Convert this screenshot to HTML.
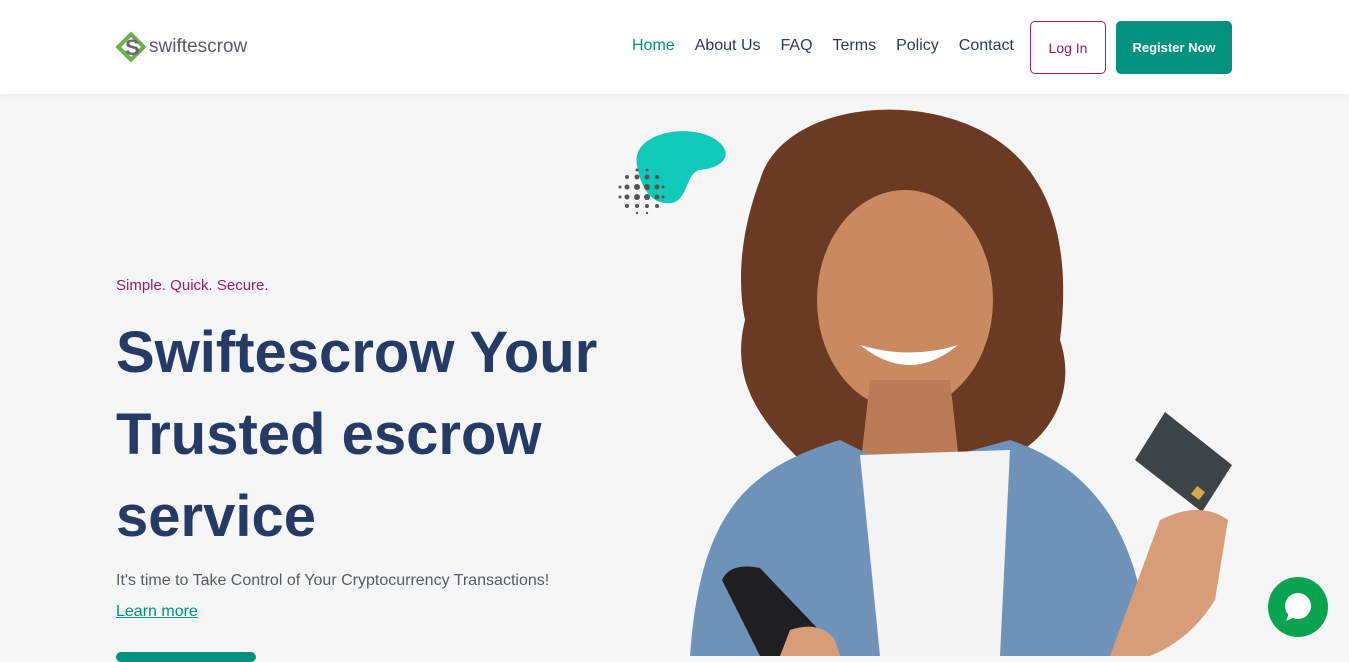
<!DOCTYPE html>
<html><head><meta charset="utf-8"><style>
*{margin:0;padding:0;box-sizing:border-box}
body{width:1349px;height:656px;overflow:hidden;background:#f6f6f6;font-family:"Liberation Sans",sans-serif;position:relative}
header{position:absolute;top:0;left:0;width:1349px;height:94px;background:#fff;box-shadow:0 2px 8px rgba(0,0,0,.05);z-index:5}
.logo{position:absolute;left:116px;top:32px;display:flex;align-items:center}
.logo span{font-size:19px;color:#5a5a6a;margin-left:3px}
nav{position:absolute;top:37px;left:632px;display:flex;font-size:16px;color:#2a3a5e}
nav a{margin-right:20px}
.login{position:absolute;left:1030px;top:21px;width:76px;height:53px;border:1px solid #9b1a6c;border-radius:5px;color:#9b1a6c;font-size:14px;display:flex;align-items:center;justify-content:center}
.reg{position:absolute;left:1116px;top:21px;width:116px;height:53px;background:#00927f;border-radius:5px;color:#fff;font-size:13px;font-weight:bold;display:flex;align-items:center;justify-content:center}
.tag{position:absolute;left:116px;top:277px;color:#9b1a6c;font-size:15px}
h1{position:absolute;left:116px;top:312px;font-size:58px;line-height:82px;color:#253a64;font-weight:bold;width:520px}
.sub{position:absolute;left:116px;top:572px;color:#555b66;font-size:16px}
.lm{position:absolute;left:116px;top:603px;color:#00927f;font-size:16px;text-decoration:underline}
.btn{position:absolute;left:116px;top:652px;width:140px;height:10px;background:#00927f;border-radius:5px}
.chat{position:absolute;left:1268px;top:577px;width:60px;height:60px;border-radius:50%;background:#0aa34f}
</style></head><body>
<header>
<div class="logo">
<div style="position:relative;width:30px;height:30px">
<div style="position:absolute;left:4px;top:4px;width:22px;height:22px;border:4px solid #6ab04c;transform:rotate(45deg)"></div>
<div style="position:absolute;left:9px;top:3px;font-size:22px;font-weight:bold;color:#6b6373">S</div>
</div><span>swiftescrow</span></div>
<nav><a style="color:#00927f">Home</a><a>About Us</a><a>FAQ</a><a>Terms</a><a>Policy</a><a>Contact</a></nav>
<div class="login">Log In</div><div class="reg">Register Now</div>
</header>
<svg style="position:absolute;left:0;top:0" width="1349" height="656">
<path d="M637 165 C630 130 700 120 722 145 C732 158 720 168 700 170 C686 172 688 200 672 203 C650 206 640 185 637 165Z" fill="#10c9b8"/>
<g fill="#555">
<circle cx="637" cy="170" r="1.5"/><circle cx="647" cy="170" r="1.5"/>
<circle cx="627" cy="177" r="2"/><circle cx="637" cy="177" r="2.5"/><circle cx="647" cy="177" r="2.5"/><circle cx="657" cy="177" r="2"/>
<circle cx="620" cy="187" r="1.5"/><circle cx="627" cy="187" r="2.5"/><circle cx="637" cy="187" r="3"/><circle cx="647" cy="187" r="3"/><circle cx="657" cy="187" r="2.5"/><circle cx="663" cy="187" r="1.5"/>
<circle cx="620" cy="197" r="1.5"/><circle cx="627" cy="197" r="2.5"/><circle cx="637" cy="197" r="3"/><circle cx="647" cy="197" r="3"/><circle cx="657" cy="197" r="2.5"/><circle cx="663" cy="197" r="1.5"/>
<circle cx="627" cy="206" r="2"/><circle cx="637" cy="206" r="2"/><circle cx="647" cy="206" r="2"/><circle cx="657" cy="206" r="2"/>
<circle cx="637" cy="213" r="1.2"/><circle cx="647" cy="213" r="1.2"/>
</g>
<path d="M760 180 C780 110 900 90 980 130 C1060 170 1070 260 1060 340 C1080 400 1040 450 1000 460 L800 460 C760 420 730 380 745 320 C735 270 745 220 760 180Z" fill="#6b3a22"/>
<ellipse cx="905" cy="300" rx="88" ry="110" fill="#c98a62"/>
<path d="M870 380 L950 380 L960 470 L860 470Z" fill="#b97c56"/>
<path d="M860 345 Q910 385 958 345 Q910 360 860 345Z" fill="#fff"/>
<path d="M690 656 C700 520 740 470 840 440 L900 470 L1010 440 C1100 470 1140 540 1150 656Z" fill="#6f93b8"/>
<path d="M860 455 L1010 450 L1000 656 L880 656Z" fill="#f3f3f3"/>
<path d="M1135 460 L1165 412 L1232 465 L1202 512Z" fill="#3d4448"/>
<rect x="1193" y="488" width="10" height="10" fill="#d8a94a" transform="rotate(38 1198 493)"/>
<path d="M1160 520 Q1200 500 1228 520 L1215 600 Q1190 640 1150 656 L1110 656 Z" fill="#d79c78"/>
<path d="M722 580 Q730 562 760 568 L838 650 L830 656 L760 656Z" fill="#1f1f22"/>
<path d="M790 630 Q820 620 835 640 L840 656 L780 656Z" fill="#d79c78"/>
</svg>
<div class="tag">Simple. Quick. Secure.</div>
<h1>Swiftescrow Your Trusted escrow service</h1>
<div class="sub">It's time to Take Control of Your Cryptocurrency Transactions!</div>
<div class="lm">Learn more</div>
<div class="btn"></div>
<div class="chat"><svg width="60" height="60"><circle cx="30" cy="29" r="13" fill="#fff"/><path d="M21 36 L18 44 L27 40Z" fill="#fff"/></svg></div>
</body></html>
